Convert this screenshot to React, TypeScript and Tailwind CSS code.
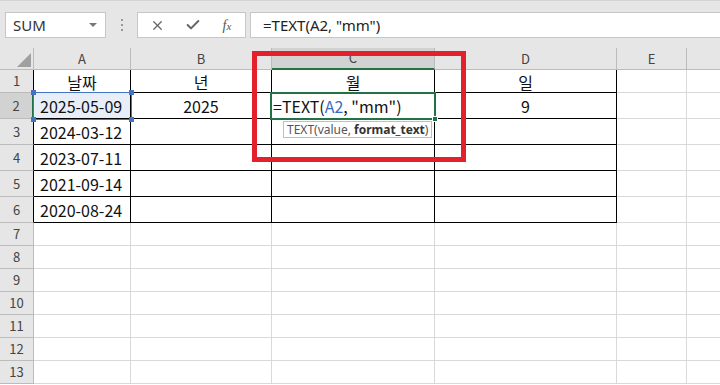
import React from 'react';
import { X, Check } from 'lucide-react';

type Row = { n: number; h: string; cells: string[] };

const cols = [
    { key: 'A', w: 'w-[97px]' },
    { key: 'B', w: 'w-[141px]' },
    { key: 'C', w: 'w-[163px]' },
    { key: 'D', w: 'w-[182px]' },
    { key: 'E', w: 'w-[70px]' },
    { key: 'F', w: 'w-[40px]' },
];

const rows: Row[] = [
    { n: 1, h: 'h-[23px]', cells: ['날짜', '년', '월', '일', '', ''] },
    { n: 2, h: 'h-[26px]', cells: ['2025-05-09', '2025', '', '9', '', ''] },
    { n: 3, h: 'h-[26px]', cells: ['2024-03-12', '', '', '', '', ''] },
    { n: 4, h: 'h-[26px]', cells: ['2023-07-11', '', '', '', '', ''] },
    { n: 5, h: 'h-[26px]', cells: ['2021-09-14', '', '', '', '', ''] },
    { n: 6, h: 'h-[26px]', cells: ['2020-08-24', '', '', '', '', ''] },
    { n: 7, h: 'h-[23px]', cells: ['', '', '', '', '', ''] },
    { n: 8, h: 'h-[23px]', cells: ['', '', '', '', '', ''] },
    { n: 9, h: 'h-[23px]', cells: ['', '', '', '', '', ''] },
    { n: 10, h: 'h-[23px]', cells: ['', '', '', '', '', ''] },
    { n: 11, h: 'h-[23px]', cells: ['', '', '', '', '', ''] },
    { n: 12, h: 'h-[23px]', cells: ['', '', '', '', '', ''] },
    { n: 13, h: 'h-[23px]', cells: ['', '', '', '', '', ''] },
];

const cellFont = { fontFamily: "'Noto Sans CJK KR', 'Noto Sans', sans-serif" };

export default function App() {
    return (
        <div className="relative w-[720px] h-[385px] overflow-hidden bg-white" style={cellFont}>
            {/* 수식 입력줄 */}
            <div className="h-[48px] bg-[#e6e6e6] border-t border-[#d4d4d4] flex items-start pt-[11px]">
                <div className="ml-[5px] w-[101px] h-[26px] bg-white border border-[#c6c6c6] flex items-center justify-between pl-[7px] pr-[8px]">
                    <span className="text-[15px] text-[#333]" style={{ fontFamily: "'Noto Sans', sans-serif" }}>SUM</span>
                    <span className="w-0 h-0 border-l-[4px] border-r-[4px] border-t-[4px] border-l-transparent border-r-transparent border-t-[#777]" />
                </div>
                <div className="w-[31px] h-[26px] flex flex-col items-center justify-center gap-[3px]">
                    <span className="w-[2px] h-[2px] bg-[#999]" />
                    <span className="w-[2px] h-[2px] bg-[#999]" />
                    <span className="w-[2px] h-[2px] bg-[#999]" />
                </div>
                <div className="w-[109px] h-[26px] bg-white border border-[#c6c6c6] flex items-center">
                    <div className="w-[38px] flex justify-center">
                        <X size={15} strokeWidth={2} color="#666" />
                    </div>
                    <div className="w-[34px] flex justify-center">
                        <Check size={16} strokeWidth={3} color="#666" />
                    </div>
                    <div className="w-[34px] flex justify-center">
                        <span className="italic text-[14px] text-[#555]" style={{ fontFamily: "'Liberation Serif', serif" }}>
                            f<span className="text-[11px]">x</span>
                        </span>
                    </div>
                </div>
                <div className="ml-[4px] flex-1 h-[26px] bg-white border border-r-0 border-[#c6c6c6] flex items-center pl-[12px]">
                    <span className="text-[15px] text-[#222]" style={{ fontFamily: "'Noto Sans', sans-serif" }}>=TEXT(A2, "mm")</span>
                </div>
            </div>

            {/* 열 머리글 */}
            <div className="flex h-[22px]">
                <div className="w-[34px] shrink-0 h-full bg-[#e6e6e6] border-r border-b border-[#bcbcbc]" />
                {cols.map((c) => (
                    <div
                        key={c.key}
                        className={`${c.w} shrink-0 h-full flex items-center justify-center text-[13px] text-[#444] border-r border-[#bcbcbc] ${
                            c.key === 'C'
                                ? 'bg-[#d2d2d2] border-b-2 border-b-[#217346]'
                                : 'bg-[#e6e6e6] border-b border-b-[#bcbcbc]'
                        }`}
                    >
                        {c.key !== 'F' && c.key}
                    </div>
                ))}
            </div>

            {/* 행 */}
            {rows.map((r) => {
                const inData = r.n <= 6;
                return (
                    <div key={r.n} className={`flex ${r.h}`}>
                        <div
                            className={`w-[34px] shrink-0 h-full flex items-center justify-center text-[13px] text-[#444] border-b border-b-[#bcbcbc] ${
                                r.n === 2
                                    ? 'bg-[#d2d2d2] border-r-2 border-r-[#217346]'
                                    : inData
                                    ? 'bg-[#e6e6e6] border-r border-r-black'
                                    : 'bg-[#e6e6e6] border-r border-r-[#bcbcbc]'
                            }`}
                        >
                            {r.n}
                        </div>
                        {cols.map((c, i) => {
                            const dark = inData && i <= 3;
                            const v = r.cells[i];
                            const isHeader = r.n === 1;
                            const isDate = i === 0 && r.n > 1;
                            return (
                                <div
                                    key={c.key}
                                    className={`${c.w} shrink-0 h-full flex items-center text-[16px] text-[#111] border-r border-b ${
                                        dark ? 'border-black' : 'border-[#d9d9d9]'
                                    } ${isDate ? 'justify-start pl-[6px]' : 'justify-center'} ${
                                        r.n === 2 && i === 0 ? 'bg-[#e7eef8]' : ''
                                    } ${inData && i === 4 ? 'border-b-[#d9d9d9]' : ''} ${isHeader ? 'pt-[1px]' : ''}`}
                                >
                                    {r.n === 2 && i === 2 ? '' : v}
                                </div>
                            );
                        })}
                    </div>
                );
            })}

            {/* 전체 선택 삼각형 */}
            <svg className="absolute left-[17px] top-[53px]" width="14" height="14" viewBox="0 0 14 14">
                <polygon points="14,0 14,14 0,14" fill="#a0a0a0" />
            </svg>

            {/* A2 참조 테두리 */}
            <div className="absolute left-[33px] top-[92px] w-[99px] h-[28px] border-[1.5px] border-[#4472c4]">
                <span className="absolute -left-[3px] -top-[3px] w-[5px] h-[5px] bg-[#4472c4]" />
                <span className="absolute -right-[3px] -top-[3px] w-[5px] h-[5px] bg-[#4472c4]" />
                <span className="absolute -left-[3px] -bottom-[3px] w-[5px] h-[5px] bg-[#4472c4]" />
                <span className="absolute -right-[3px] -bottom-[3px] w-[5px] h-[5px] bg-[#4472c4]" />
            </div>

            {/* C2 활성 셀 */}
            <div className="absolute left-[270px] top-[92px] w-[166px] h-[28px] border-2 border-[#217346] bg-white flex items-center pl-[1px]">
                <span className="text-[16px] text-[#111]">
                    =TEXT(<span className="text-[#3b6cc4]">A2</span>, "mm")
                </span>
                <span className="absolute -right-[4px] -bottom-[4px] w-[6px] h-[6px] bg-[#217346] border border-white" />
            </div>

            {/* 함수 툴팁 */}
            <div className="absolute left-[283px] top-[121px] h-[17px] px-[3px] bg-white border border-[#bfbfbf] flex items-center text-[12px] text-[#555]" style={{ fontFamily: "'Noto Sans', sans-serif" }}>
                TEXT(value, <span className="font-bold text-[#333] ml-[3px]">format_text</span>)
            </div>

            {/* 빨간 강조 박스 */}
            <div className="absolute left-[252px] top-[51px] w-[214px] h-[111px] border-[5px] border-[#e3202b]" />
        </div>
    );
}
